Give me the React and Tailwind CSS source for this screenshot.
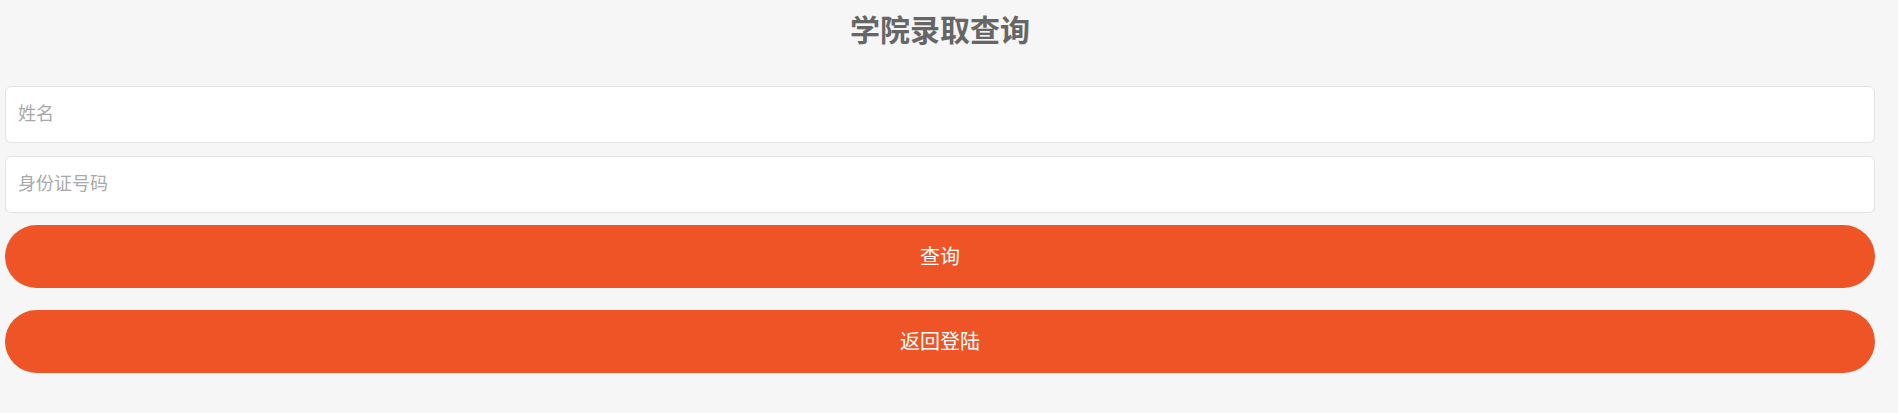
export default function App() {
  const font = { fontFamily: '"Liberation Sans", "Noto Sans CJK SC", sans-serif' };
  return (
    <div className="min-h-screen w-full bg-[#f6f6f6]" style={font}>
      <div className="w-[1870px] ml-[5px] flex flex-col">
        <div className="h-[60px] flex items-center justify-center text-[30px] font-bold text-[#666666]">
          学院录取查询
        </div>
        <input
          className="mt-[26px] h-[57px] w-full rounded-[6px] border border-[#e3e3e3] bg-white px-[12px] text-[18px] text-[#333] placeholder:text-[#a9a9a9] outline-none"
          placeholder="姓名"
        />
        <input
          className="mt-[13px] h-[57px] w-full rounded-[6px] border border-[#e3e3e3] bg-white px-[12px] text-[18px] text-[#333] placeholder:text-[#a9a9a9] outline-none"
          placeholder="身份证号码"
        />
        <button className="mt-[12px] h-[63px] w-full rounded-full bg-[#ee5425] text-[20px] text-white">
          查询
        </button>
        <button className="mt-[22px] h-[63px] w-full rounded-full bg-[#ee5425] text-[20px] text-white">
          返回登陆
        </button>
      </div>
    </div>
  );
}
